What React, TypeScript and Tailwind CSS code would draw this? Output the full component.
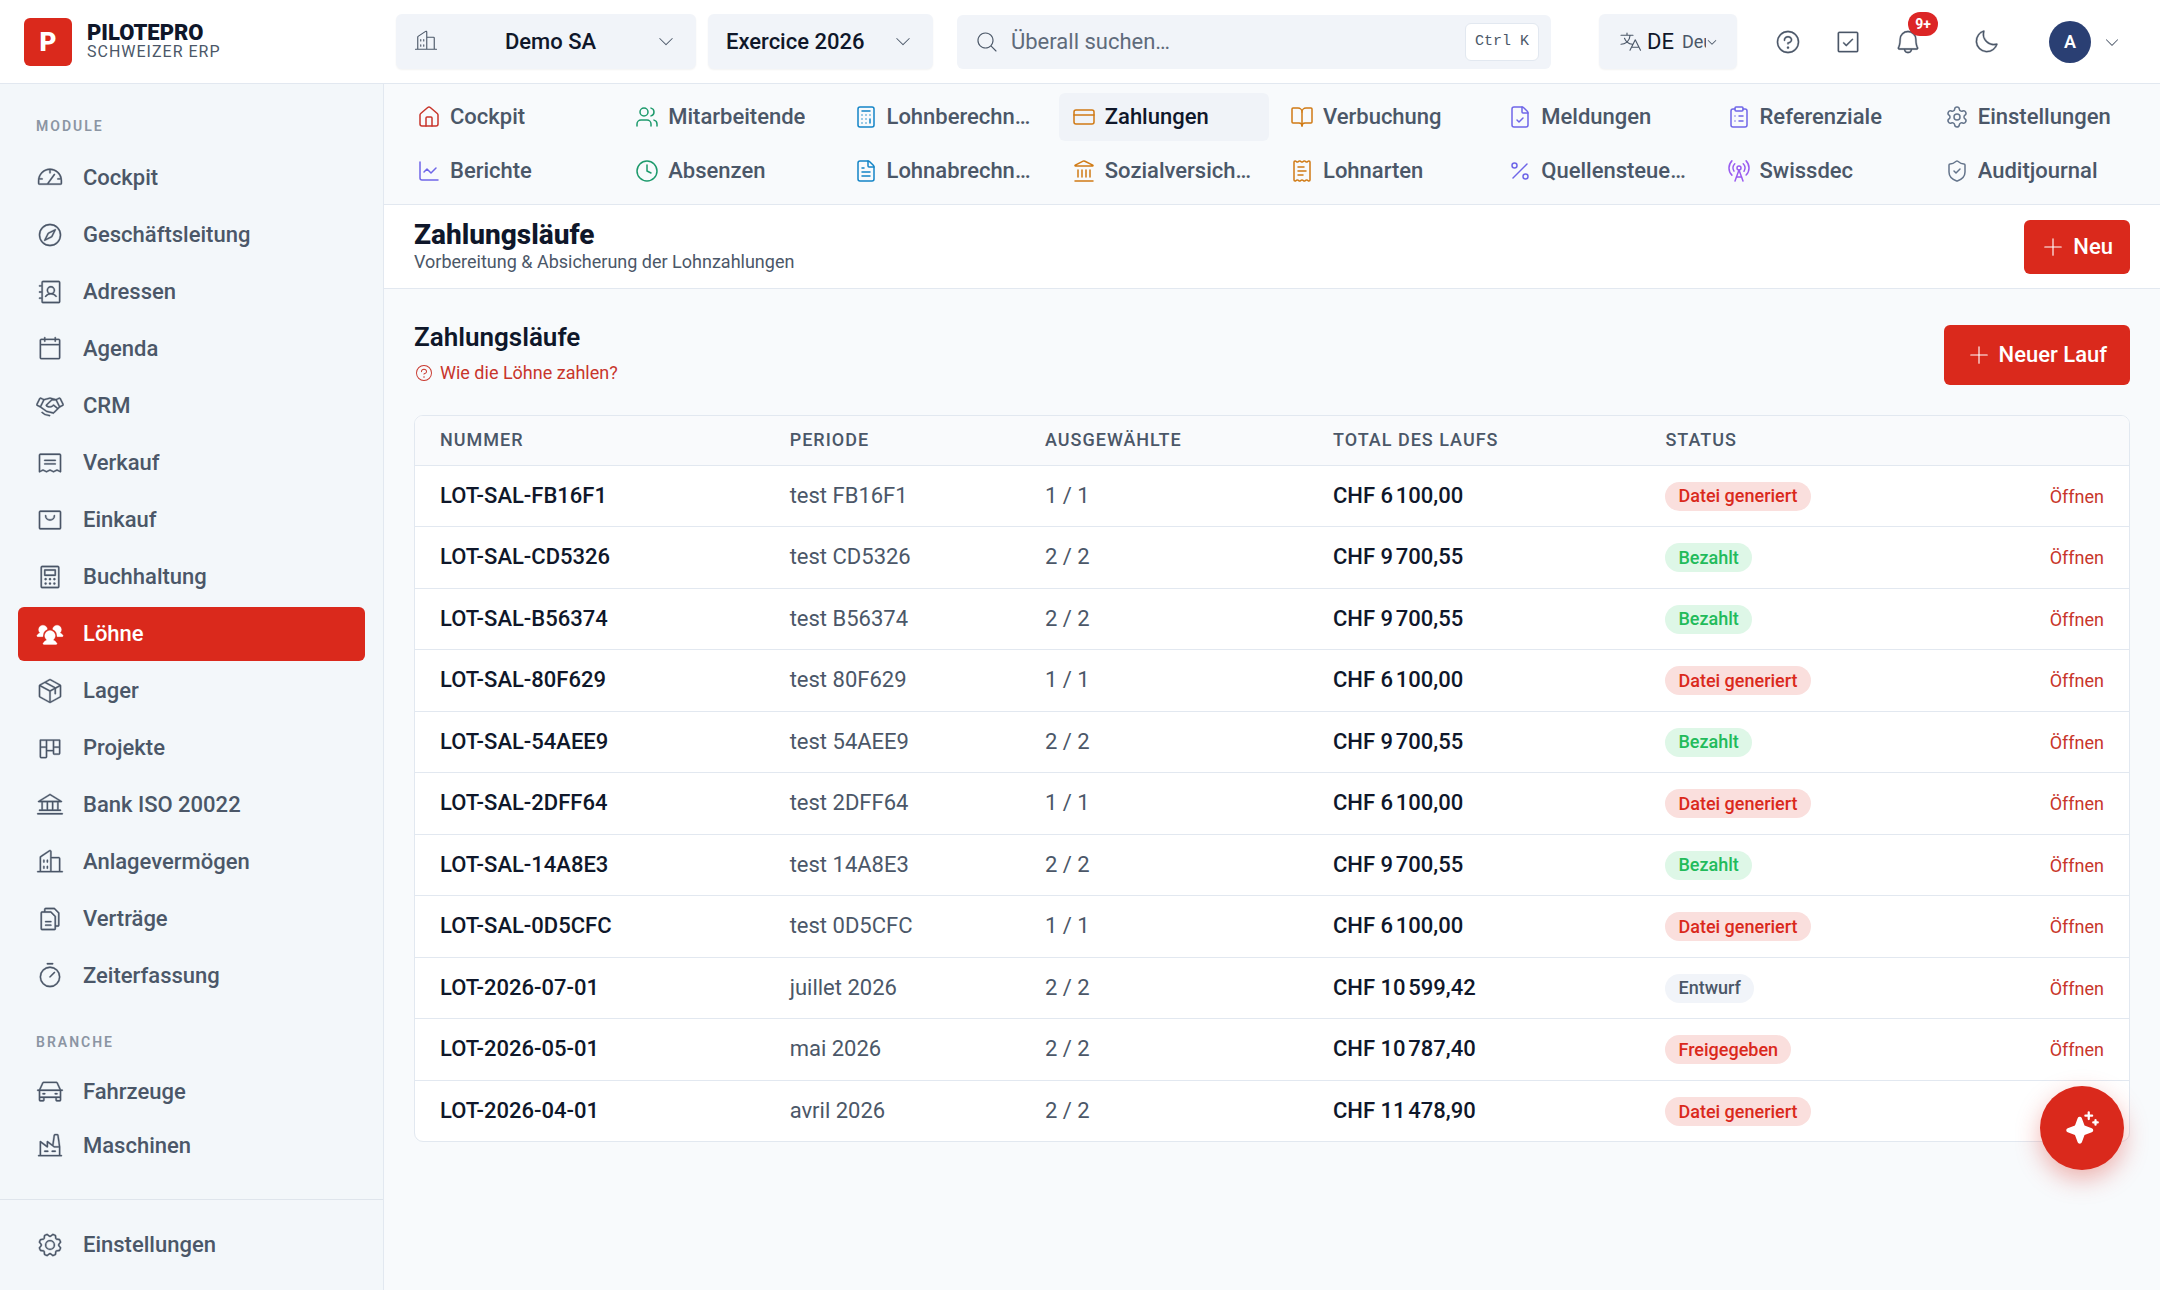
import type { ComponentType, ReactNode } from "react";
import {
  BookOpen,
  Calculator,
  ChartLine,
  ClipboardList,
  Clock,
  CreditCard,
  FileCheck,
  FileText,
  House,
  Landmark,
  Percent,
  RadioTower,
  ReceiptText,
  Settings,
  ShieldCheck,
  Users,
} from "lucide-react";
import type { LucideIcon } from "lucide-react";
import {
  PiAddressBookLight,
  PiBankLight,
  PiBellLight,
  PiBuildingsLight,
  PiCalculatorLight,
  PiCalendarBlankLight,
  PiCarLight,
  PiCaretDownLight,
  PiCheckSquareLight,
  PiCompassLight,
  PiFactoryLight,
  PiFilesLight,
  PiGaugeLight,
  PiGearLight,
  PiHandshakeLight,
  PiKanbanLight,
  PiMagnifyingGlassLight,
  PiMoonLight,
  PiPackageLight,
  PiPlusLight,
  PiQuestionLight,
  PiReceiptLight,
  PiShoppingBagLight,
  PiSparkleFill,
  PiTimerLight,
  PiTranslateLight,
  PiUsersThreeFill,
} from "react-icons/pi";

type PiIcon = ComponentType<{ className?: string }>;

interface ModuleItem {
  label: string;
  icon: PiIcon;
  active?: boolean;
}

interface NavTab {
  label: string;
  icon: LucideIcon;
  color: string;
  active?: boolean;
}

type Status = "generated" | "paid" | "draft" | "released";

interface Run {
  number: string;
  period: string;
  selected: string;
  total: string;
  status: Status;
}

const MODULES: ModuleItem[] = [
  { label: "Cockpit", icon: PiGaugeLight },
  { label: "Geschäftsleitung", icon: PiCompassLight },
  { label: "Adressen", icon: PiAddressBookLight },
  { label: "Agenda", icon: PiCalendarBlankLight },
  { label: "CRM", icon: PiHandshakeLight },
  { label: "Verkauf", icon: PiReceiptLight },
  { label: "Einkauf", icon: PiShoppingBagLight },
  { label: "Buchhaltung", icon: PiCalculatorLight },
  { label: "Löhne", icon: PiUsersThreeFill, active: true },
  { label: "Lager", icon: PiPackageLight },
  { label: "Projekte", icon: PiKanbanLight },
  { label: "Bank ISO 20022", icon: PiBankLight },
  { label: "Anlagevermögen", icon: PiBuildingsLight },
  { label: "Verträge", icon: PiFilesLight },
  { label: "Zeiterfassung", icon: PiTimerLight },
];

const BRANCHES: ModuleItem[] = [
  { label: "Fahrzeuge", icon: PiCarLight },
  { label: "Maschinen", icon: PiFactoryLight },
];

const TABS: NavTab[] = [
  { label: "Cockpit", icon: House, color: "text-[#c8352b]" },
  { label: "Mitarbeitende", icon: Users, color: "text-[#1d9a6c]" },
  { label: "Lohnberechnungen", icon: Calculator, color: "text-[#1384c6]" },
  { label: "Zahlungen", icon: CreditCard, color: "text-[#d07a14]", active: true },
  { label: "Verbuchung", icon: BookOpen, color: "text-[#d07a14]" },
  { label: "Meldungen", icon: FileCheck, color: "text-[#6f66e8]" },
  { label: "Referenziale", icon: ClipboardList, color: "text-[#6f66e8]" },
  { label: "Einstellungen", icon: Settings, color: "text-[#64748b]" },
  { label: "Berichte", icon: ChartLine, color: "text-[#6f66e8]" },
  { label: "Absenzen", icon: Clock, color: "text-[#1d9a6c]" },
  { label: "Lohnabrechnungen", icon: FileText, color: "text-[#1384c6]" },
  { label: "Sozialversicherungen", icon: Landmark, color: "text-[#d07a14]" },
  { label: "Lohnarten", icon: ReceiptText, color: "text-[#d07a14]" },
  { label: "Quellensteuertarife", icon: Percent, color: "text-[#6f66e8]" },
  { label: "Swissdec", icon: RadioTower, color: "text-[#9a5cf0]" },
  { label: "Auditjournal", icon: ShieldCheck, color: "text-[#64748b]" },
];

const RUNS: Run[] = [
  { number: "LOT-SAL-FB16F1", period: "test FB16F1", selected: "1 / 1", total: "CHF 6\u202f100,00", status: "generated" },
  { number: "LOT-SAL-CD5326", period: "test CD5326", selected: "2 / 2", total: "CHF 9\u202f700,55", status: "paid" },
  { number: "LOT-SAL-B56374", period: "test B56374", selected: "2 / 2", total: "CHF 9\u202f700,55", status: "paid" },
  { number: "LOT-SAL-80F629", period: "test 80F629", selected: "1 / 1", total: "CHF 6\u202f100,00", status: "generated" },
  { number: "LOT-SAL-54AEE9", period: "test 54AEE9", selected: "2 / 2", total: "CHF 9\u202f700,55", status: "paid" },
  { number: "LOT-SAL-2DFF64", period: "test 2DFF64", selected: "1 / 1", total: "CHF 6\u202f100,00", status: "generated" },
  { number: "LOT-SAL-14A8E3", period: "test 14A8E3", selected: "2 / 2", total: "CHF 9\u202f700,55", status: "paid" },
  { number: "LOT-SAL-0D5CFC", period: "test 0D5CFC", selected: "1 / 1", total: "CHF 6\u202f100,00", status: "generated" },
  { number: "LOT-2026-07-01", period: "juillet 2026", selected: "2 / 2", total: "CHF 10\u202f599,42", status: "draft" },
  { number: "LOT-2026-05-01", period: "mai 2026", selected: "2 / 2", total: "CHF 10\u202f787,40", status: "released" },
  { number: "LOT-2026-04-01", period: "avril 2026", selected: "2 / 2", total: "CHF 11\u202f478,90", status: "generated" },
];

const STATUS: Record<Status, { label: string; style: string }> = {
  generated: { label: "Datei generiert", style: "bg-[#fadfdd] text-[#da291c]" },
  paid: { label: "Bezahlt", style: "bg-[#def7e7] text-[#22bb5b]" },
  draft: { label: "Entwurf", style: "bg-[#f1f4f9] text-[#4b5768]" },
  released: { label: "Freigegeben", style: "bg-[#fadfdd] text-[#da291c]" },
};

function SidebarLink({ item }: { item: ModuleItem }) {
  const Icon = item.icon;
  return (
    <a
      href="#"
      aria-current={item.active ? "page" : undefined}
      className={`flex h-[54px] items-center gap-[19px] rounded-md px-[18px] font-medium ${
        item.active ? "bg-[#da291c] text-white" : "text-[#4b5768]"
      }`}
    >
      <Icon className="size-7 shrink-0 [stroke-width:3]" />
      <span className="truncate">{item.label}</span>
    </a>
  );
}

function SectionLabel({ children }: { children: ReactNode }) {
  return <h2 className="px-[18px] text-sm leading-6 font-semibold tracking-[2px] text-[#8b95a3] uppercase">{children}</h2>;
}

function Sidebar() {
  return (
    <aside className="flex w-96 shrink-0 flex-col border-r border-[#e2e8f0] bg-[#f3f7fa]">
      <nav className="px-[18px] pt-[30px]" aria-label="Module">
        <SectionLabel>Module</SectionLabel>
        <div className="mt-[13px] flex flex-col gap-[3px]">
          {MODULES.map((m) => <SidebarLink key={m.label} item={m} />)}
        </div>
        <div className="mt-[27px]">
          <SectionLabel>Branche</SectionLabel>
        </div>
        <div className="mt-[11px] flex flex-col">
          {BRANCHES.map((m) => <SidebarLink key={m.label} item={m} />)}
        </div>
      </nav>
      <div className="mt-auto border-t border-[#dfe5ec] p-[18px]">
        <SidebarLink item={{ label: "Einstellungen", icon: PiGearLight }} />
      </div>
    </aside>
  );
}

function IconButton({ label, children }: { label: string; children: ReactNode }) {
  return (
    <button type="button" aria-label={label} className="relative flex size-[60px] items-center justify-center text-[#4b5768]">
      {children}
    </button>
  );
}

function TopBar() {
  return (
    <header className="flex h-[84px] shrink-0 items-center border-b border-[#e2e8f0] bg-white pr-[39px] text-[#0f172a]">
      <a href="#" className="flex w-[396px] shrink-0 items-center gap-[15px] pl-6">
        <span className="flex size-12 items-center justify-center rounded-md bg-[#da291c] text-[26px] leading-none font-black text-white">P</span>
        <span className="flex flex-col">
          <span className="text-[22px] leading-5 font-black">PILOTEPRO</span>
          <span className="text-base leading-[18px] tracking-[1px] text-[#4b5768]">SCHWEIZER ERP</span>
        </span>
      </a>

      <div className="relative shrink-0">
        <select
          aria-label="Mandant"
          className="h-[55px] w-[300px] appearance-none rounded-md bg-[#f1f4f9] pr-[45px] pl-[54px] font-medium shadow-xs [text-align-last:center]"
        >
          <option>Demo SA</option>
        </select>
        <PiBuildingsLight className="pointer-events-none absolute top-[15px] left-[18px] size-6 text-[#4b5768]" />
        <PiCaretDownLight className="pointer-events-none absolute top-[17px] right-5 size-5 text-[#4b5768]" />
      </div>
      <div className="relative ml-3 shrink-0">
        <select
          aria-label="Geschäftsjahr"
          className="h-[55px] w-[225px] appearance-none rounded-md bg-[#f1f4f9] pr-[45px] pl-[18px] font-medium shadow-xs"
        >
          <option>Exercice 2026</option>
        </select>
        <PiCaretDownLight className="pointer-events-none absolute top-[17px] right-5 size-5 text-[#4b5768]" />
      </div>

      <label className="ml-6 flex h-[54px] min-w-0 flex-1 items-center rounded-md bg-[#f1f4f9] pr-3 pl-[18px]">
        <PiMagnifyingGlassLight className="size-6 shrink-0 text-[#4b5768]" />
        <input
          type="search"
          aria-label="Überall suchen"
          placeholder="Überall suchen…"
          className="ml-3 min-w-0 flex-1 bg-transparent outline-none placeholder:text-[#5f6b7b]"
        />
        <kbd className="flex h-[38px] items-center rounded-md border border-[#e2e8f0] bg-white px-[9px] font-['Liberation_Mono',monospace] text-[15px] text-[#4b5768]">
          Ctrl K
        </kbd>
      </label>

      <label className="ml-12 flex h-[55px] w-[138px] shrink-0 items-center rounded-md bg-[#f1f4f9] pl-[19px] shadow-xs">
        <PiTranslateLight className="size-6 shrink-0 text-[#4b5768]" />
        <span className="ml-[5px]">DE</span>
        <select aria-label="Sprache" className="ml-2 w-6 appearance-none bg-transparent text-lg text-[#4b5768]">
          <option>Deutsch</option>
        </select>
        <PiCaretDownLight className="size-3 shrink-0 text-[#4b5768] [stroke-width:6]" />
      </label>

      <div className="ml-[21px] flex shrink-0 items-center">
        <IconButton label="Hilfe"><PiQuestionLight className="size-7 [stroke-width:3]" /></IconButton>
        <IconButton label="Aufgaben"><PiCheckSquareLight className="size-7 [stroke-width:3]" /></IconButton>
        <IconButton label="Benachrichtigungen">
          <PiBellLight className="size-7 [stroke-width:3]" />
          <span className="absolute top-0 right-0 flex h-6 w-[30px] items-center justify-center rounded-full bg-[#dc2626] text-sm font-bold text-white">
            9+
          </span>
        </IconButton>
        <div className="ml-[18px]">
          <IconButton label="Dunkelmodus"><PiMoonLight className="size-7 [stroke-width:3]" /></IconButton>
        </div>
        <button type="button" aria-label="Benutzermenü" className="ml-[33px] flex items-center gap-3">
          <span className="flex size-[42px] items-center justify-center rounded-full bg-[#2a3f73] text-lg font-semibold text-white">A</span>
          <PiCaretDownLight className="size-[18px] text-[#4b5768]" />
        </button>
      </div>
    </header>
  );
}

function ModuleTabs() {
  return (
    <nav aria-label="Löhne" className="grid grid-cols-8 gap-x-2 gap-y-[6px] border-b border-[#e2e8f0] py-[9px] pr-[18px] pl-5">
      {TABS.map(({ label, icon: Icon, color, active }) => (
        <a
          key={label}
          href="#"
          aria-current={active ? "page" : undefined}
          className={`flex h-12 min-w-0 items-center gap-[9px] rounded-md px-[13px] font-medium ${
            active ? "bg-[#f0f3f8] text-[#0f172a]" : "text-[#4b5768]"
          }`}
        >
          <Icon className={`size-6 shrink-0 ${color}`} strokeWidth={1.5} />
          <span className="truncate">{label}</span>
        </a>
      ))}
    </nav>
  );
}

function RunsTable() {
  return (
    <div className="mt-[30px] overflow-hidden rounded-[9px] border border-[#e2e8f0] bg-white">
      <table className="w-full table-fixed text-left">
        <thead className="bg-[#f9fafc] text-lg text-[#4b5768]">
          <tr className="h-[49px] border-b border-[#e2e8f0] uppercase">
            <th className="w-[20.4%] pl-[25px] font-medium tracking-[1px]">Nummer</th>
            <th className="w-[14.9%] pl-[25px] font-medium tracking-[1px]">Periode</th>
            <th className="w-[16.8%] pl-[25px] font-medium tracking-[1px]">Ausgewählte</th>
            <th className="w-[19.4%] pl-[25px] font-medium tracking-[1px]">Total des Laufs</th>
            <th className="pl-[25px] font-medium tracking-[1px]">Status</th>
            <th className="w-[10%]" aria-label="Aktionen" />
          </tr>
        </thead>
        <tbody>
          {RUNS.map((run) => (
            <tr key={run.number} className="border-b border-[#e2e8f0] last:border-b-0 odd:h-[61px] even:h-[62px]">
              <td className="pl-[25px] font-medium text-[#0f172a]">{run.number}</td>
              <td className="pl-[25px] text-[#4b5768]">{run.period}</td>
              <td className="pl-[25px] text-[#4b5768]">{run.selected}</td>
              <td className="pl-[25px] font-medium text-[#0f172a]">{run.total}</td>
              <td className="pl-[25px]">
                <span className={`inline-flex h-[29px] items-center rounded-full px-[13px] align-middle text-lg font-medium ${STATUS[run.status].style}`}>
                  {STATUS[run.status].label}
                </span>
              </td>
              <td className="pr-[25px] text-right">
                <a href="#" className="text-lg text-[#c8352b]">Öffnen</a>
              </td>
            </tr>
          ))}
        </tbody>
      </table>
    </div>
  );
}

export default function App() {
  return (
    <div className="flex min-h-screen flex-col bg-[#f8fafc] font-[Roboto,'Noto_Sans',sans-serif] text-[22px] leading-[30px]">
      <TopBar />
      <div className="flex flex-1">
        <Sidebar />
        <div className="min-w-0 flex-1">
          <ModuleTabs />
          <div className="flex h-[84px] items-center justify-between border-b border-[#e2e8f0] bg-white px-[30px]">
            <div>
              <h1 className="text-[28px] leading-[30px] font-extrabold text-[#0f172a]">Zahlungsläufe</h1>
              <p className="text-lg leading-6 text-[#4b5768]">Vorbereitung &amp; Absicherung der Lohnzahlungen</p>
            </div>
            <button type="button" className="flex h-[54px] items-center gap-2 rounded-md bg-[#da291c] px-[17px] font-medium text-white">
              <PiPlusLight className="size-6" />
              Neu
            </button>
          </div>

          <main className="px-[30px] pt-[30px]">
            <div className="flex items-end justify-between">
              <div>
                <h2 className="text-[26px] leading-9 font-semibold text-[#0f172a]">Zahlungsläufe</h2>
                <a href="#" className="mt-[6px] flex items-center gap-[6px] text-lg leading-6 text-[#c8352b]">
                  <PiQuestionLight className="size-5" />
                  Wie die Löhne zahlen?
                </a>
              </div>
              <button type="button" className="flex h-[60px] items-center gap-2 rounded-md bg-[#da291c] px-[23px] font-medium text-white">
                <PiPlusLight className="size-6" />
                Neuer Lauf
              </button>
            </div>
            <RunsTable />
          </main>
        </div>
      </div>

      <button
        type="button"
        aria-label="Assistent"
        className="fixed right-9 bottom-[120px] flex size-[84px] items-center justify-center rounded-full bg-[#da291c] text-white shadow-[0_9px_24px_rgba(218,41,28,0.35)]"
      >
        <PiSparkleFill className="size-9" />
      </button>
    </div>
  );
}
